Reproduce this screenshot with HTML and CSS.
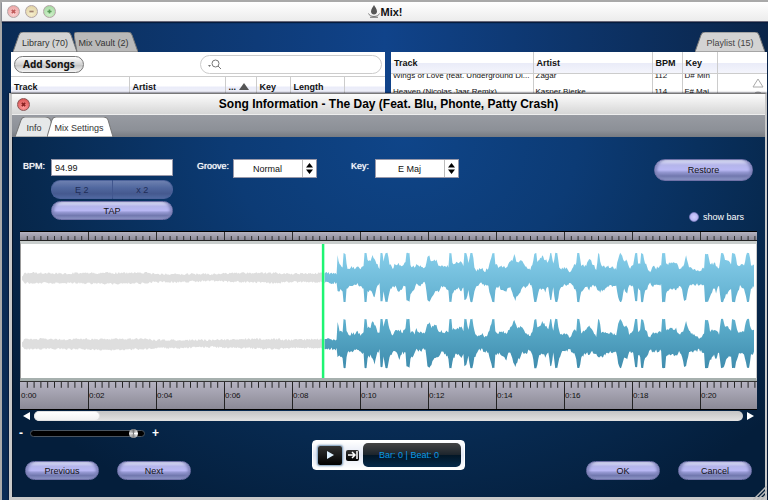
FILE: index.html
```html
<!DOCTYPE html>
<html lang="en">
<head>
<meta charset="utf-8">
<title>Mix!</title>
<link rel="stylesheet" href="styles.css">
</head>
<body>
<main class="app">
  <header class="titlebar">
    <div class="lights">
      <button class="light red" aria-label="Close window"><svg viewBox="0 0 13 13"><path d="M4.5 4.5l4 4m0-4l-4 4"/></svg></button>
      <button class="light amber" aria-label="Minimise window"><svg viewBox="0 0 13 13"><path d="M4 6.5h5"/></svg></button>
      <button class="light green" aria-label="Zoom window"><svg viewBox="0 0 13 13"><path d="M4 6.5h5M6.5 4v5"/></svg></button>
    </div>
    <h1 class="app-title"><svg class="logo" viewBox="0 0 12 13"><path d="M6 0C5 2 3 4 3 6.500C3 8.500 4.500 9.500 6 9.500S9 8.500 9 6.500C9 4 7 2 6 0z"/><path d="M.5 8.500C1 10 3 11.500 6 11.500S11 10 11.500 8.500M2 12.300h8" class="stroke"/></svg>Mix!</h1>
    <span></span>
  </header>
  <div class="decks">
    <section class="deck">
      <nav class="tabs">
        <button class="tab"><svg viewBox="0 0 64 20" preserveAspectRatio="none"><path class="fill-light" d="M0 20L6 3Q7 0 10 0H54Q57 0 58 3L64 20z"/></svg><span>Library (70)</span></button>
        <button class="tab overlap"><svg viewBox="0 0 64 20" preserveAspectRatio="none"><path class="fill-mid" d="M3 20L0 3Q0 0 3 0H54Q57 0 58 3L64 20z"/></svg><span>Mix Vault (2)</span></button>
      </nav>
      <div class="toolbar">
        <button class="add">Add Songs</button>
        <label class="search"><svg viewBox="0 0 14 11"><path d="M0 6h3L1.500 8z" class="solid"/><circle cx="7.500" cy="4.500" r="3.500"/><path d="M10 7l3 3"/></svg><input type="search" aria-label="Search songs"></label>
      </div>
      <table class="head library">
        <colgroup><col><col><col><col><col><col></colgroup>
        <tr><th>Track</th><th>Artist</th><th>... <svg class="sort" viewBox="0 0 10 7"><path d="M5 0l5 7H0z"/></svg></th><th>Key</th><th>Length</th><th></th></tr>
      </table>
    </section>
    <section class="deck">
      <nav class="tabs end">
        <button class="tab playlist-tab"><svg viewBox="0 0 70 20" preserveAspectRatio="none"><path class="fill-light" d="M0 20L6 3Q7 0 10 0H60Q63 0 64 3L70 20z"/></svg><span>Playlist (15)</span></button>
      </nav>
      <table class="head playlist">
        <colgroup><col><col><col><col><col></colgroup>
        <tr><th>Track</th><th>Artist</th><th>BPM</th><th>Key</th><th></th></tr>
      </table>
      <div class="rows">
        <table class="playlist">
          <colgroup><col><col><col><col><col></colgroup>
          <tr><td>Wings of Love (feat. Underground Di...</td><td>Zagar</td><td>112</td><td>D# Min</td><td rowspan="2" class="scroll"><svg viewBox="0 0 14 20"><path d="M7 1l5 8H2z"/><circle cx="7" cy="19" r="5"/></svg></td></tr>
          <tr><td>Heaven (Nicolas Jaar Remix)</td><td>Kasper Bjerke</td><td>114</td><td>F# Maj</td></tr>
        </table>
      </div>
    </section>
  </div>
</main>

<section class="dialog" role="dialog" aria-labelledby="dialog-title">
  <header class="dialog-bar">
    <button class="light close" aria-label="Close"><svg viewBox="0 0 13 13"><path d="M4.500 4.500l4 4m0-4l-4 4"/></svg></button>
    <h2 id="dialog-title">Song Information - The Day (Feat. Blu, Phonte, Patty Crash)</h2>
    <span></span>
  </header>
  <nav class="dialog-tabs">
    <button class="tab info"><svg viewBox="0 0 38 19" preserveAspectRatio="none"><path class="fill-info" d="M0 19L6 3Q7 0 10 0H30Q35 0 36 4L38 19z"/></svg><span>Info</span></button>
    <button class="tab settings"><svg viewBox="0 0 68 19" preserveAspectRatio="none"><path class="fill-white" d="M0 19L5 3Q6 0 9 0H57Q61 0 62 3L67 19z"/></svg><span>Mix Settings</span></button>
  </nav>
  <div class="dialog-body">
    <form class="controls">
      <label class="caption" for="bpm">BPM:</label>
      <div class="bpm">
        <input id="bpm" type="text" value="94.99">
        <div class="pair"><button type="button" class="pill" disabled>Ę 2</button><button type="button" class="pill" disabled>x 2</button></div>
        <button type="button" class="pill">TAP</button>
      </div>
      <label class="caption groove" for="groove">Groove:</label>
      <div class="picker"><select id="groove"><option>Normal</option></select><svg viewBox="0 0 7 11"><path d="M3.500 0L7 4.500H0zM3.500 11L7 6.500H0z"/></svg></div>
      <label class="caption key" for="key">Key:</label>
      <div class="picker"><select id="key"><option>E Maj</option></select><svg viewBox="0 0 7 11"><path d="M3.500 0L7 4.500H0zM3.500 11L7 6.500H0z"/></svg></div>
      <div class="side">
        <button type="button" class="pill restore">Restore</button>
        <label class="bars"><input type="radio">show bars</label>
      </div>
    </form>
    <div class="editor">
      <svg class="ruler top" id="ruler-top" viewBox="0 0 737 10" preserveAspectRatio="none"></svg>
      <svg class="wave" id="wave" viewBox="0 0 736 134" preserveAspectRatio="none">
        <defs>
          <linearGradient id="light" gradientUnits="userSpaceOnUse" x1="0" y1="9" x2="0" y2="58"><stop offset="0" stop-color="#85cde9"/><stop offset="1" stop-color="#62b0d0"/></linearGradient>
          <linearGradient id="deep" gradientUnits="userSpaceOnUse" x1="0" y1="75" x2="0" y2="125"><stop offset="0" stop-color="#5eb0ce"/><stop offset="1" stop-color="#3f8cad"/></linearGradient>
        </defs>
      </svg>
      <div class="timeline">
        <svg class="ruler bottom" id="ruler-bottom" viewBox="0 0 737 28" preserveAspectRatio="none"></svg>
        <div class="times"><span>0:00</span><span>0:02</span><span>0:04</span><span>0:06</span><span>0:08</span><span>0:10</span><span>0:12</span><span>0:14</span><span>0:16</span><span>0:18</span><span>0:20</span></div>
      </div>
    </div>
    <div class="scroller">
      <button aria-label="Scroll left"><svg viewBox="0 0 7 8"><path d="M7 0v8L0 4z"/></svg></button>
      <div class="track"><div class="thumb"></div></div>
      <button aria-label="Scroll right"><svg viewBox="0 0 7 8"><path d="M0 0v8l7-4z"/></svg></button>
    </div>
    <footer class="footer">
      <div class="left">
        <div class="zoom"><span>-</span><input type="range" min="0" max="100" value="94" aria-label="Zoom"><span>+</span></div>
        <div class="actions"><button class="pill">Previous</button><button class="pill">Next</button></div>
      </div>
      <div class="transport">
        <button class="play" aria-label="Play"><svg viewBox="0 0 8 8"><path d="M1 0l7 4-7 4z"/></svg></button>
        <button class="skip" aria-label="Skip to end"><svg viewBox="0 0 10 8"><path d="M0 4h6M4 1l3 3-3 3M9 0v8"/></svg></button>
        <output>Bar: 0 | Beat: 0</output>
      </div>
      <div class="actions right"><button class="pill">OK</button><button class="pill">Cancel</button></div>
    </footer>
  </div>
  <svg class="grip" viewBox="0 0 14 14"><path d="M0 14L14 0M4 14L14 4M8 14l6-6"/></svg>
</section>
<script src="wave.js"></script>
</body>
</html>
```

FILE: styles.css
```css
* { box-sizing: border-box; }
body {
  margin: 0;
  min-height: 100vh;
  overflow: hidden;
  padding: 2px 0 0 2px;
  background: #a9a9a9;
  font: 9px "Liberation Sans", Arial, sans-serif;
  color: #111;
}
button, input, select { font: inherit; color: inherit; margin: 0; padding: 0; border: 0; background: none; }
svg { display: block; }
h1, h2 { margin: 0; font-weight: bold; }
table { border-collapse: collapse; table-layout: fixed; width: 100%; }

.app {
  min-height: calc(100vh - 2px);
  background: linear-gradient(90deg, #0a2b55, #10438a 50%, #0a2549);
}
.titlebar, .dialog-bar { display: grid; grid-template-columns: 1fr auto 1fr; align-items: center; }
.titlebar { height: 20px; background: linear-gradient(#fff, #ececec); border-bottom: 1px solid #667; box-shadow: 0 1px 1px #061c3c; }
.lights { display: flex; gap: 5px; padding-left: 5px; }
.light { width: 13px; height: 13px; border-radius: 50%; border: 1px solid #b3a5a5; }
.light svg { width: 11px; height: 11px; fill: none; stroke: #a08070; stroke-width: 2; }
.red { background: radial-gradient(circle at 50% 70%, #fbd5d5, #e99a9a); }
.red svg { stroke: #c05a5a; }
.amber { background: radial-gradient(circle at 50% 70%, #f7efcf, #dccd9c); }
.green { background: radial-gradient(circle at 50% 70%, #d3f3cd, #9cd49a); }
.green svg { stroke: #5a9a5a; }
.close { margin-left: 5px; background: radial-gradient(circle at 50% 75%, #ff9a9a, #d34848); border-color: #8c5555; }
.close svg { stroke: #8a2222; stroke-width: 2; }
.app-title { display: flex; align-items: center; gap: 1px; font-size: 11px; }
.logo { width: 12px; height: 13px; fill: #555; }
.logo .stroke { fill: none; stroke: #777; }

.decks { display: grid; grid-template-columns: 374px 1fr; gap: 6px; padding: 10px 1px 0 9px; }
.tabs { display: flex; height: 20px; padding-left: 2px; }
.tabs.end { justify-content: flex-end; padding-right: 2px; }
.tab { display: grid; width: 64px; height: 20px; color: #333; }
.tab > * { grid-area: 1 / 1; }
.tab svg { width: 100%; height: 100%; stroke: #777; stroke-width: 1; }
.tab span { align-self: center; padding-top: 1px; }
.overlap { margin-left: -3px; }
.overlap span { padding-right: 5px; }
.playlist-tab { width: 70px; color: #444; }
.fill-light { fill: #d3d3d3; }
.fill-mid { fill: #b9b9b9; }
.fill-info { fill: #e6e8e9; }
.fill-white { fill: #fff; }
.toolbar { display: flex; justify-content: space-between; align-items: center; height: 24px; padding: 0 3px; background: #fff; }
.add {
  width: 70px; height: 17px; border-radius: 9px; border: 1px solid #777;
  background: linear-gradient(#fff, #d2d2d2 50%, #c4c4c4 55%, #f6f6f6);
  font: bold 10px "Noto Sans", sans-serif; line-height: 14px;
}
.search { display: flex; align-items: center; width: 182px; height: 19px; padding: 0 7px; border: 1px solid #ccc; border-radius: 10px; }
.search svg { width: 14px; height: 11px; fill: none; stroke: #777; flex: none; }
.search .solid { fill: #777; stroke: none; }
.search input { flex: 1; min-width: 0; appearance: none; outline: 0; }

.head { height: 21px; background: linear-gradient(#fff 50%, #e9ebf8 50%, #f4f5fc); border-top: 1px solid #ccc; }
.playlist.head { border-top: 0; }
th { text-align: left; padding: 0 3px; white-space: nowrap; border-right: 1px solid #ccc; }
th:last-child { border-right: 0; }
.library col:nth-child(1) { width: 118px; }
.library col:nth-child(2) { width: 96px; }
.library col:nth-child(3) { width: 31px; }
.library col:nth-child(4) { width: 34px; }
.library col:nth-child(5) { width: 54px; }
.playlist col:nth-child(1) { width: 142px; }
.playlist col:nth-child(2) { width: 119px; }
.playlist col:nth-child(3) { width: 30px; }
.playlist col:nth-child(4) { width: 35px; }
.sort { display: inline-block; width: 10px; height: 7px; fill: #555; }
.rows { overflow: hidden; background: #fff; border-top: 1px solid #ccc; }
.rows table { margin-top: -7px; }
td { height: 16px; padding: 0 2px; font-size: 8px; white-space: nowrap; border-right: 1px solid #ccc; }
.scroll { border: 0; vertical-align: bottom; }
.scroll svg { width: 14px; height: 22px; margin-left: auto; fill: #fff; stroke: #aaa; }
.scroll circle { fill: #ccc; }

.dialog {
  position: absolute; left: 9px; right: 1px; top: 93px; bottom: 0;
  display: flex; flex-direction: column;
  border: solid #c9c9c9; border-width: 0 2px 3px 3px;
  border-top: 1px solid #777;
  background: #c9c9c9;
  box-shadow: 0 0 2px #001;
}
.dialog-bar { height: 21px; flex: none; background: linear-gradient(#fcfcfc, #d6d6d6); border-bottom: 1px solid #eee; }
.dialog-bar h2 { font-size: 12px; color: #000; }
.dialog-tabs { display: flex; align-items: flex-end; height: 22px; flex: none; padding-left: 3px; background: linear-gradient(#989ba2, #8c9097 70%, #777b82); }
.dialog-tabs .tab { height: 20px; }
.dialog-tabs .info { width: 38px; }
.dialog-tabs .settings { width: 67px; margin-left: -6px; z-index: 1; }
.dialog-tabs .settings span { padding-right: 3px; }
.dialog-body {
  flex: 1; display: flex; flex-direction: column; min-height: 0; padding: 22px 8px 0 7px;
  background: radial-gradient(ellipse 66% 115% at 52% 0, #0f4589, #0c3b75 35%, #07294f 75%, #041e3b);
  border-left: 1px solid #05162c;
}
.controls { display: flex; height: 72px; padding: 0 4px 0 3px; color: #fff; }
.caption { width: 28px; padding-top: 2px; text-shadow: 0 0 1px #fff; }
.groove { width: 36px; margin-left: 24px; }
.key { width: 24px; margin-left: 34px; }
.bpm { display: flex; flex-direction: column; width: 122px; }
.bpm input { width: 100%; height: 17px; padding-left: 3px; background: #fff; color: #111; border: 1px solid #99a; }
.pair { display: flex; margin: 4px 0 2px; }
.pair .pill { flex: 1; width: 50%; }
.pair .pill:first-child { border-radius: 9px 0 0 9px; border-right-color: #42578f; }
.pair .pill:last-child { border-radius: 0 9px 9px 0; border-left: 0; }
.pill {
  height: 19px; border-radius: 10px; border: 1px solid #6f72a8; color: #111;
  background: linear-gradient(#dfe1f4, #b4b5ea 25%, #b9b8f4 50%, #9396d0 62%, #7178ae 80%, #8f95c6);
  box-shadow: inset 3px 0 3px -1px #7d82b8, inset -3px 0 3px -1px #7d82b8;
}
.pill:disabled { border-color: #4d639b; background: linear-gradient(#6d80b0, #51689f 40%, #45598f 75%, #5068a0); box-shadow: none; color: #1f2d57; }
.picker { display: grid; width: 84px; height: 19px; }
.picker > * { grid-area: 1 / 1; }
.picker select { appearance: none; width: 100%; height: 100%; padding-right: 15px; text-align-last: center; border: 1px solid #99a; background: linear-gradient(90deg, #fff 68px, #bbb 68px, #bbb 69px, #fff 69px); color: #111; }
.picker svg { width: 7px; height: 11px; justify-self: end; align-self: center; margin-right: 4px; pointer-events: none; }
.side { margin-left: auto; display: flex; flex-direction: column; justify-content: space-between; align-items: flex-end; padding-bottom: 9px; }
.restore { width: 99px; height: 22px; border-radius: 11px; }
.bars { display: flex; align-items: center; gap: 4px; padding-right: 9px; }
.bars input { appearance: none; width: 10px; height: 10px; border-radius: 50%; border: 1px solid #7a7ebd; background: radial-gradient(#d2d0ff, #a9a8ee); }

.ruler, .wave { width: 100%; }
.ruler { stroke: #222; background: linear-gradient(#b5b3c1, #8b8996); }
.top { height: 10px; border-top: 1px solid #000; border-bottom: 1px solid #222; }
.wave { height: 140px; background: #fff; border-top: 3px solid #c9cecd; border-bottom: 3px solid #a6b0ae; border-left: 1px solid #999; border-right: 1px solid #ccc; }
.timeline { display: grid; }
.timeline > * { grid-area: 1 / 1; min-width: 0; }
.bottom { height: 29px; border-top: 1px solid #333; border-bottom: 1px solid #000; }
.times { display: grid; grid-template-columns: repeat(10, 68px) 1fr; align-items: center; font-size: 8px; padding: 0 0 1px 1px; }

.scroller { display: flex; align-items: center; justify-content: space-between; gap: 4px; height: 12px; padding: 0 3px; }
.scroller button { width: 7px; }
.scroller svg { width: 7px; height: 8px; fill: #fff; }
.track { flex: 1; height: 10px; border-radius: 5px; background: linear-gradient(#c4c4c4, #e2e2e2); }
.thumb { width: 66px; height: 10px; border-radius: 5px; background: linear-gradient(#fff, #f2f2f2); border: 1px solid #e2e2e2; }

.footer { flex: 1; display: grid; grid-template-columns: 1fr auto 1fr; padding: 0 5px 17px; }
.left { display: flex; flex-direction: column; justify-content: space-between; }
.zoom { display: flex; align-items: center; gap: 7px; height: 12px; margin: 5px 0 0 -6px; color: #fff; font: bold 12px "Liberation Sans", sans-serif; }
.zoom input { appearance: none; width: 115px; height: 7px; border-radius: 4px; background: #000; border: 1px solid #4a5560; }
.zoom input::-webkit-slider-thumb { appearance: none; width: 9px; height: 9px; border-radius: 50%; background: conic-gradient(#777, #fff, #888, #ddd, #777); }
.actions { display: flex; gap: 18px; }
.actions .pill { width: 74px; }
.right { justify-content: flex-end; align-items: flex-end; }
.transport { display: flex; align-items: center; gap: 4px; width: 153px; height: 30px; margin-top: 18px; padding: 3px 3px 3px 5px; border-radius: 4px; background: linear-gradient(#fff, #e3e8f5 50%, #fff); border: 1px solid #fff; }
.transport button { display: grid; place-items: center; background: linear-gradient(#333, #000); border-radius: 2px; }
.play { width: 24px; height: 19px; box-shadow: 0 0 2px 1px #7295b5; }
.play svg { width: 8px; height: 8px; fill: #dff1ff; }
.skip { width: 13px; height: 11px; }
.skip svg { width: 10px; height: 8px; fill: none; stroke: #fff; stroke-width: 1.500; }
.transport output { flex: 1; height: 24px; border-radius: 5px; background: linear-gradient(#444, #1d252d 48%, #021626 50%, #05294a); color: #0a9be6; text-align: center; line-height: 24px; padding-right: 6px; }
.grip { position: absolute; right: -2px; bottom: -3px; width: 14px; height: 14px; fill: none; stroke: #bbb; stroke-width: 1.500; }
```

FILE: wave.js
```js
const NS = "http://www.w3.org/2000/svg";
function addPath(svg, d, attrs) {
  const p = document.createElementNS(NS, "path");
  p.setAttribute("d", d);
  for (const k in attrs) p.setAttribute(k, attrs[k]);
  svg.appendChild(p);
}

// Rulers: ten minor ticks for each two-second major line.
let top1 = "", bottom1 = "";
for (let i = 1; i < 109; i++) {
  const x = (i * 6.8 + 0.5).toFixed(1);
  const major = i % 10 === 0;
  top1 += `M${x} ${major ? 0 : 5}V10`;
  bottom1 += `M${x} 0V${major ? 28 : 6}`;
}
addPath(document.getElementById("ruler-top"), top1, {});
addPath(document.getElementById("ruler-bottom"), bottom1, {});

// Envelope samples: x, level above the centre line, level below it.
const samples = [
  [304,5,5],[316,5,5],[317,22,14],[319,14,12],[322,12,14],[323,25,24],[325,24,24],[326,13,12],[328,8,8],[331,11,7],[334,10,7],[337,12,6],[340,9,8],
  [343,11,10],[344,25,24],[346,25,24],[347,17,13],[350,17,12],[352,23,16],[354,20,20],[356,14,10],[359,10,6],[360,25,23],[362,25,23],[363,17,12],[365,25,24],[367,25,24],
  [369,14,13],[372,10,9],[375,14,8],[379,14,15],[382,12,9],[385,15,10],[386,25,22],[389,25,24],[390,12,15],[394,11,10],[396,15,6],[399,12,7],[402,10,6],[405,11,5],
  [407,20,22],[409,22,24],[411,16,20],[413,18,17],[416,18,12],[418,12,13],[421,13,9],[424,12,9],[427,12,12],[428,12,14],[429,25,24],[431,25,24],[432,15,17],[435,14,11],
  [437,16,10],[441,16,13],[443,13,9],[444,25,22],[446,25,21],[448,14,13],[450,25,24],[452,25,24],[454,12,14],[456,8,9],[459,9,6],[462,11,6],[464,6,7],[468,11,8],
  [470,18,17],[472,25,24],[474,25,24],[475,13,11],[479,11,9],[482,12,12],[486,11,15],[488,14,9],[490,17,9],[492,18,15],[494,24,20],[495,20,23],[497,15,17],[500,18,13],
  [502,17,9],[505,11,10],[509,8,6],[512,12,10],[514,24,24],[516,25,24],[517,17,20],[519,18,12],[522,23,10],[525,18,13],[528,16,9],[530,25,22],[531,25,22],[533,13,10],
  [535,25,24],[537,25,24],[539,12,14],[542,9,8],[546,11,7],[550,6,6],[554,14,10],[556,14,14],[557,25,24],[559,25,24],[561,12,14],[566,13,8],[569,19,11],[572,15,8],
  [576,8,9],[578,25,14],[579,24,14],[581,12,13],[587,11,9],[592,11,8],[596,9,7],[598,20,20],[600,25,24],[601,24,24],[604,17,12],[607,18,15],[609,10,8],[613,12,9],
  [615,25,23],[617,25,23],[618,13,10],[620,14,12],[621,25,24],[623,24,24],[625,15,13],[628,9,9],[630,6,5],[633,11,9],[636,10,7],[641,12,6],[642,25,24],[645,25,24],
  [646,14,14],[651,15,10],[656,15,12],[659,9,8],[662,11,12],[664,15,23],[666,23,22],[669,12,8],[672,10,7],[676,7,7],[679,6,6],[684,10,8],[685,24,24],[688,24,24],
  [690,13,17],[694,15,11],[696,13,14],[699,9,8],[701,25,24],[703,25,24],[705,17,18],[708,17,14],[711,13,12],[712,25,24],[715,24,24],[717,13,15],[720,12,8],[724,13,12],
  [727,25,24],[729,25,24],[731,14,11],[734,13,8],[735,13,8]
];
const intro = [[1,2,2],[4,5,5],[30,5,5],[46,4,5],[55,5,5],[85,5,6],[127,5,5],[134,4,4],[160,4,4],[190,4,3],[225,5,4],[258,5,5],[264,4,4],[303,5,4]];

// Small repeatable jitter so that the outline looks sampled.
const jitter = (x, seed) => { const v = Math.sin(x * 12.99 + seed * 78.2) * 43758.5; return v - Math.floor(v) - 0.5; };

function outline(points, centre, seed, amount) {
  const upper = [], lower = [];
  for (let i = 0; i < points.length - 1; i++) {
    const [x0, u0, d0] = points[i], [x1, u1, d1] = points[i + 1];
    for (let x = x0; x < x1; x++) {
      const t = (x - x0) / (x1 - x0);
      const u = u0 + (u1 - u0) * t, d = d0 + (d1 - d0) * t;
      const a = u > 22 ? 0.6 : amount, b = d > 21 ? 0.6 : amount;
      upper.push(`${x} ${(centre - u + jitter(x, seed) * a).toFixed(1)}`);
      lower.unshift(`${x} ${(centre + d + jitter(x, seed + 3) * b).toFixed(1)}`);
    }
  }
  return "M" + upper.concat(lower).join("L") + "z";
}
const wave = document.getElementById("wave");
addPath(wave, outline(intro, 34, 1, 2), { fill: "#dedede" });
addPath(wave, outline(intro, 100, 2, 2), { fill: "#dedede" });
addPath(wave, outline(samples, 34, 4, 3.2), { fill: "url(#light)" });
addPath(wave, outline(samples, 100, 5, 3.2), { fill: "url(#deep)" });
addPath(wave, "M302.500 0V134", { stroke: "#1ef573", "stroke-width": 2.5 });
```
